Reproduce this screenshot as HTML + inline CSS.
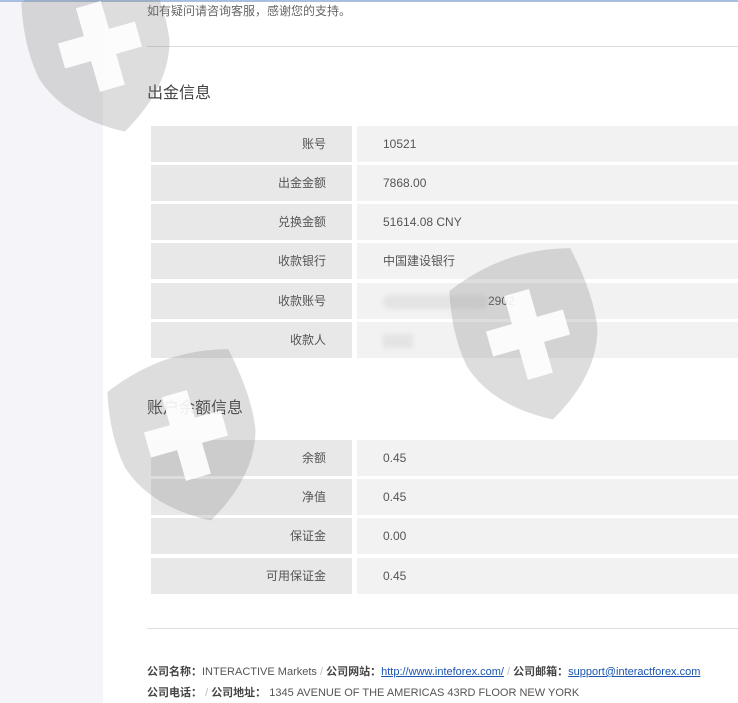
<!DOCTYPE html>
<html><head><meta charset="utf-8">
<style>
*{margin:0;padding:0;box-sizing:border-box}
body{width:738px;height:703px;overflow:hidden;background:#fff;font-family:"Liberation Sans","Noto Sans CJK SC",sans-serif;color:#555;position:relative}
.side{position:absolute;left:0;top:0;width:103px;height:703px;background:#f5f5f9}
.topline{position:absolute;left:0;top:0;width:738px;height:2px;background:#a7c0e0}
.t{position:absolute;font-size:12px;color:#666}
.h{position:absolute;left:147px;font-size:16px;color:#444}
.hr{position:absolute;left:147px;right:0;height:1px;background:#ddd}
.row{position:absolute;left:151px;width:587px;height:36px}
.row .l{position:absolute;left:0;top:0;width:201px;height:36px;background:#e8e8e8;text-align:right;padding-right:26px;line-height:36px;font-size:12px;color:#555}
.row .v{position:absolute;left:206px;top:0;right:0;height:36px;background:#f2f2f2;padding-left:26px;line-height:36px;font-size:12px;color:#555}
.foot{position:absolute;left:147px;font-size:11px;color:#555}
.foot b{color:#444}
.foot a{color:#1a55b0;text-decoration:underline}
.sl{color:#bbb}
svg.w{position:absolute;pointer-events:none}
</style></head><body>
<div class="side"></div>
<div class="topline"></div>
<div class="t" style="left:147px;top:2px;">如有疑问请咨询客服，感谢您的支持。</div>
<div class="hr" style="top:46px"></div>
<div class="h" style="top:79px">出金信息</div>
<div class="row" style="top:126px"><div class="l">账号</div><div class="v">10521</div></div>
<div class="row" style="top:165px"><div class="l">出金金额</div><div class="v">7868.00</div></div>
<div class="row" style="top:204px"><div class="l">兑换金额</div><div class="v">51614.08 CNY</div></div>
<div class="row" style="top:243px"><div class="l">收款银行</div><div class="v">中国建设银行</div></div>
<div class="row" style="top:283px"><div class="l">收款账号</div><div class="v"><span style="display:inline-block;width:105px;height:14px;background:#e4e4e4;border-radius:7px;vertical-align:middle;filter:blur(2px)"></span>2902</div></div>
<div class="row" style="top:322px"><div class="l">收款人</div><div class="v"><span style="display:inline-block;width:30px;height:14px;background:#e4e4e4;vertical-align:middle;filter:blur(2px)"></span></div></div>
<div class="h" style="top:394px">账户余额信息</div>
<div class="row" style="top:440px"><div class="l">余额</div><div class="v">0.45</div></div>
<div class="row" style="top:479px"><div class="l">净值</div><div class="v">0.45</div></div>
<div class="row" style="top:518px"><div class="l">保证金</div><div class="v">0.00</div></div>
<div class="row" style="top:558px"><div class="l">可用保证金</div><div class="v">0.45</div></div>
<div class="hr" style="top:628px"></div>
<div class="foot" style="top:663px"><b>公司名称：</b>INTERACTIVE Markets <span class="sl">/</span> <b>公司网站：</b><a>http://www.inteforex.com/</a> <span class="sl">/</span> <b>公司邮箱：</b><a>support@interactforex.com</a></div>
<div class="foot" style="top:684px"><b>公司电话：</b> <span class="sl">/</span> <b>公司地址：</b> 1345 AVENUE OF THE AMERICAS 43RD FLOOR NEW YORK</div>

<svg class="w" width="738" height="703" style="left:0;top:0">
<defs>
<g id="sh">
<path d="M-64,-62 Q0,-88 64,-70 Q74,-20 68,15 Q55,60 0,90 Q-55,60 -68,15 Q-74,-20 -64,-62 Z" fill="rgba(120,120,120,0.25)"/>
<path d="M-13,-42 L13,-42 L13,-13 L40,-13 L40,13 L13,13 L13,45 L-13,45 L-13,13 L-40,13 L-40,-13 L-13,-13 Z" fill="rgba(255,255,255,0.9)"/>
</g>
</defs>
<use href="#sh" transform="translate(100,45) rotate(-16)"/>
<use href="#sh" transform="translate(528,333) rotate(-16)"/>
<use href="#sh" transform="translate(186,434) rotate(-16)"/>
</svg>
</body></html>
